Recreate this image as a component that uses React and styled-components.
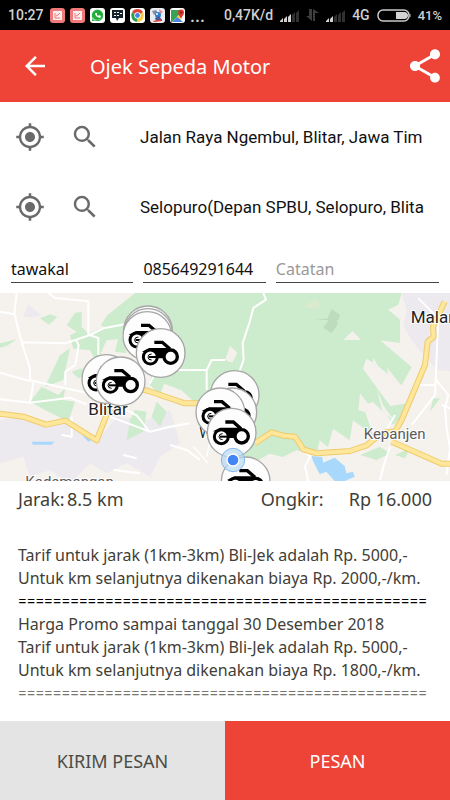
import styled, { createGlobalStyle } from "styled-components";
import { MdArrowBack, MdMyLocation, MdSearch, MdShare } from "react-icons/md";
import { FaWhatsapp } from "react-icons/fa";

const places = [
	{
		id: "pickup",
		label: "Lokasi jemput",
		value: "Jalan Raya Ngembul, Blitar, Jawa Tim",
	},
	{
		id: "destination",
		label: "Lokasi tujuan",
		value: "Selopuro(Depan SPBU, Selopuro, Blita",
	},
];

const drivers = [
	[444, 121],
	[444, 129],
	[442, 138],
	[482, 189],
	[319, 267],
	[362, 274],
	[704, 315],
	[697, 367],
	[661, 367],
	[695, 428],
	[737, 574],
];

const mainRoad =
	"M0 371l70 9 68 24 58-12 94 59 35-90 100-63 20 5 110 37h60M765 460l50-33 35 10 35 3 25 38 40 12 100-7 50-17 40-33 25-8h20l20-35 70-165 8-70 18-15-2-30 35-75M1175 455l150 66h30";

const separator = "=".repeat(47);

export default function App() {
	return (
		<>
			<GlobalStyle />
			<Page>
				<StatusBar />
				<Header>
					<IconButton aria-label='Kembali'>
						<MdArrowBack size={30} />
					</IconButton>
					<Title>Ojek Sepeda Motor</Title>
					<IconButton aria-label='Bagikan'>
						<MdShare size={40} />
					</IconButton>
				</Header>
				{places.map((p) => (
					<PlaceRow key={p.id}>
						<IconButton aria-label={`${p.label}: posisi saya`}>
							<MdMyLocation size={30} />
						</IconButton>
						<IconButton aria-label={`${p.label}: cari`}>
							<MdSearch size={30} />
						</IconButton>
						<PlaceInput aria-label={p.label} defaultValue={p.value} />
					</PlaceRow>
				))}
				<ContactRow>
					<ContactInput aria-label='Nama' defaultValue='tawakal' />
					<ContactInput
						aria-label='Nomor telepon'
						type='tel'
						defaultValue='085649291644'
					/>
					<ContactInput aria-label='Catatan' placeholder='Catatan' />
				</ContactRow>
				<DriverMap />
				<Summary>
					<Term>Jarak:</Term>
					<Distance>8.5 km</Distance>
					<Term $wide>Ongkir:</Term>
					<span>Rp 16.000</span>
				</Summary>
				<Fares>
					<p>Tarif untuk jarak (1km-3km) Bli-Jek adalah Rp. 5000,-</p>
					<p>Untuk km selanjutnya dikenakan biaya Rp. 2000,-/km.</p>
					<Separator $color='#000000'>{separator}</Separator>
					<p>Harga Promo sampai tanggal 30 Desember 2018</p>
					<p>Tarif untuk jarak (1km-3km) Bli-Jek adalah Rp. 5000,-</p>
					<p>Untuk km selanjutnya dikenakan biaya Rp. 1800,-/km.</p>
					<Separator $color='#77776f'>{separator}</Separator>
				</Fares>
				<Actions>
					<ActionButton>KIRIM PESAN</ActionButton>
					<ActionButton $primary>PESAN</ActionButton>
				</Actions>
			</Page>
		</>
	);
}

function StatusBar() {
	return (
		<StatusContainer>
			<Clock>10:27</Clock>
			<Notifications>
				<AppIcon $color='#f0797b'>
					<NoteDrawing />
				</AppIcon>
				<AppIcon $color='#f0797b'>
					<NoteDrawing />
				</AppIcon>
				<AppIcon $color='#ffffff'>
					<svg width='15' height='15' viewBox='0 0 15 15'>
						<circle cx='7.5' cy='7' r='5' fill='#1faf38' />
						<FaWhatsapp size={13} x={1} y={1} color='#1faf38' />
						<path d='M5 5q0 4 5 5l1-2-2-1-1 1-1-1 0-2z' fill='#ffffff' />
					</svg>
				</AppIcon>
				<AppIcon $color='#ffffff'>
					<svg width='15' height='15' viewBox='0 0 15 15'>
						<path d='M2 2h11v8H9l-2 3-1-3H2z' fill='#17242b' />
						<path
							d='M4 4h2v1H4zM7 4h2v1H7zM4 7h2v1H4zM7 7h2v1H7zM10 5h2v1h-2z'
							fill='#ffffff'
						/>
					</svg>
				</AppIcon>
				<AppIcon $color='#ffffff'>
					<svg width='15' height='15' viewBox='0 0 15 15'>
						<path d='M7.5 7.5L2 4.3A6.3 6.3 0 0 1 13 4.3z' fill='#de4538' />
						<path d='M7.5 7.5L2 4.3A6.3 6.3 0 0 0 7.5 13.8z' fill='#2c9e50' />
						<path d='M7.5 7.5L13 4.3A6.3 6.3 0 0 1 7.5 13.8z' fill='#f7cb3b' />
						<circle cx='7.5' cy='7.5' r='3.2' fill='#fff' />
						<circle cx='7.5' cy='7.5' r='2.4' fill='#4583e8' />
					</svg>
				</AppIcon>
				<AppIcon $color='#e9ecf0'>
					<svg width='15' height='15' viewBox='0 0 15 15'>
						<path d='M2 3l4-1 2 3-4 2z' fill='#7c90a8' />
						<path d='M9 1l4 3-3 2z' fill='#e48a8a' />
						<circle cx='8' cy='7' r='3' fill='#2f7fd0' />
						<path d='M5 10l4-2 3 4-6 1z' fill='#3f5f9c' />
						<path d='M3 13l9-2v2l-8 1z' fill='#df3b3b' />
						<circle cx='7' cy='6' r='1' fill='#fff' />
					</svg>
				</AppIcon>
				<AppIcon $color='#ffffff'>
					<svg width='15' height='15' viewBox='0 0 15 15'>
						<path d='M1 2h9v4L2 14H1z' fill='#35a455' />
						<path d='M2 14L10 6l1 8z' fill='#f3cf4c' />
						<path d='M7 9l6 5H2z' fill='#4a86e8' />
						<path d='M11 11C10 8 8 7 8 4.5a3 3 0 0 1 6 0C14 7 12 8 11 11z' fill='#d9392c' />
						<circle cx='11' cy='4.5' r='1' fill='#7a1712' />
					</svg>
				</AppIcon>
				<More>...</More>
			</Notifications>
			<span>0,47K/d</span>
			<Signal bars={3} />
			<svg width='13' height='14' viewBox='0 0 13 14' fill='#3d3d3d'>
				<path d='M3 1h3v12L0 8h3zM7 13h2V5h4L7 1z' />
			</svg>
			<Signal bars={2} />
			<span>4G</span>
			<svg width='34' height='13' viewBox='0 0 34 13'>
				<rect
					x='1'
					y='1'
					width='31'
					height='11'
					rx='5'
					fill='none'
					stroke='#c9c9c9'
					strokeWidth='1.5'
				/>
				<path d='M19 3h9q3 1 3 3.5T28 10h-9z' fill='#d4d4d4' />
				<path d='M33 5v3' stroke='#c9c9c9' />
			</svg>
			<Battery>41%</Battery>
		</StatusContainer>
	);
}

function NoteDrawing() {
	return (
		<svg width='9' height='9' viewBox='0 0 9 9'>
			<path d='M0 0h9v9H0z' fill='#fdeeee' />
			<path d='M2 2v5h5M3 5l2-1 2-2' fill='none' stroke='#ee7476' />
		</svg>
	);
}

function Signal({ bars }) {
	return (
		<svg width='19' height='13' viewBox='0 0 19 13'>
			{[0, 1, 2, 3, 4].map((i) => (
				<path
					key={i}
					d={`M${i * 4} 13v${-1 - i * 2}l3-3V13z`}
					fill={i < bars ? "#d2d2d2" : "#303030"}
				/>
			))}
		</svg>
	);
}

function Motorbike({ x, y }) {
	return (
		<g transform={`translate(${x} ${y})`}>
			<circle r='73' fill='#fdfdfd' stroke='#a6a6a6' strokeWidth='4' />
			<path d='M-56 -4L-34 -15H22L38 -8L14 2L6 16H-10L-14 2z' />
			<g fill='#fdfdfd' stroke='#000000'>
				<path d='M-19 -32H5L28 -12' fill='none' strokeWidth='10' />
				<circle cx='-31' cy='12' r='21' strokeWidth='9' />
				<circle cx='30' cy='11' r='20' strokeWidth='10' />
				<path d='M-35 12h24' strokeWidth='6' />
				<path d='M-27 3q-11 0-11 9t11 9' fill='none' strokeWidth='3' />
			</g>
		</g>
	);
}

// drawn at three units per pixel
function DriverMap() {
	return (
		<MapDrawing
			viewBox='0 9 1350 564'
			preserveAspectRatio='xMidYMin slice'
			role='img'
			aria-label='Peta pengemudi'>
			<path d='M0 0h1350v580H0z' fill='#f5f2ee' />
			<g fill='#ece9ef'>
				<path d='M0 390l60-10 70 30 60-12 100 57 60-75 90 10 70-30 30 100-60 40-30 60-70-40-60 30-50-30-60 60-60-40-60 20-20-60-70 20z' />
				<path d='M70 80l15-38 40 35-30 5zM1205 9h145v235l-40-5-70-80-30-50 10-50z' />
			</g>
			<g fill='#cdebcd'>
				<path d='M405 9h800l-10 35-30 15 35 30v70l-60-8 95 80-30 55-80-65-26-15-10 30 80 110 20 60-70-70-30 10 30 90-60-45-10 60-50-35-15 55-25-20-10 45-60-15-40 20-40-10-35 20-110-25-70-80v-60l-50-45-52-20-10-50 12-45-60 20 8-50-40-10 40-30-30-20-65 35-45-25 20-30z' />
				<path d='M225 68l20-2v45l20 20 60-25 50 5-15 35-40 5-30 65-20-35-50-5-10-40 20-10-30-20zM360 120l20 70-35-5zM180 195l30-20-20 95-55 20z' />
				<path d='M120 85l30-12 22 8-25 23zM0 160l50-12-30 20-20 5zM215 245l30-10 15 20-25 10zM90 335l35-45 50 25 20-20-5 35 35 5-20 60-70-35zM405 360l35 5-10 60-50 25 10-60zM455 380l15-45 30 30-20 45zM455 240l60-20-35 95-30-30zM580 270l20-40 20 10-30 65z' />
				<path d='M815 440l50 15-15 20-35-5zM1080 495l60-25 30 20-40 20zM1160 350l60-10-15 45-30 20zM1300 325l20 0-30 40zM1230 475l-45 20 30 10z' />
			</g>
			<g fill='#f4f1ec'>
				<path d='M1030 150l28-27 25 27zM1115 240l5-37 40 70zM1160 232l45 55-35-5zM1080 310l55 70-60-20zM1130 295l35 90-15-10zM1155 370l-20-45 50 70zM675 210l15-42 22 20-15 30z' />
			</g>
			<path d='M910 50l35-22 23 20-28 8z' fill='#d9ebcc' />
			<path
				d='M948 90l35-5 12-28 25 18-5 15-20 10-15-10zM970 113l25-35 20 22-20 30z'
				fill='#bddcbf'
			/>
			<path
				d='M96 455h68l-10 9H98zM935 498l32 3 2 17 35-15 30 25 5 22 20-5 5 15-30 13h-30l-25-28-20 8-20-40zM245 435l30 15-10 5z'
				fill='#a8d8fb'
			/>
			<g fill='none' stroke='#ffffff' strokeWidth='6' strokeLinejoin='round'>
				<path d='M50 9l-7 62 22 85 25 80v35l200 45 120 60 40 50' />
				<path d='M0 65l43 8M145 9l20 15 100 10v100l30 10v50M65 157l130 3 75-25 40-20 80-15M228 150l8 15-10 60-30 20v40M0 248l90 25M0 328l90 10 10-60' />
				<path d='M90 338l120-15 50 20M215 380v60l-30-5M330 380l120 45 60-15 60-10M510 465l50 15 40 30M370 495l40 10M340 540l80 10M450 280l20-40h150l15-30h40M620 240v60' />
				<path d='M790 9l8 20-38 25-12 45-20 60 3 50-20 55M500 240h120M900 470l30 30-15 30 10 43M1170 470l-20 60-10 40M1255 25l60 60-10 230-70 90M1305 265l40 50-10 40 5 60 10 60-10 80M1260 285h50M1325 345l25 10M1145 445l40-70' />
				<path d='M620 500l15-70M580 470l45 50' strokeWidth='4' />
			</g>
			<g fill='none' strokeLinejoin='round'>
				<path d={mainRoad} stroke='#efcb6c' strokeWidth='18' />
				<path d={mainRoad} stroke='#fee79a' strokeWidth='12' />
			</g>
			<MapLabel x='265' y='374' $size={51}>
				Blitar
			</MapLabel>
			<MapLabel x='598' y='444' $size={42}>
				Wlingi
			</MapLabel>
			<MapLabel x='1232' y='100' $size={51}>
				Malang
			</MapLabel>
			<MapLabel x='1091' y='447' $size={45} $soft>
				Kepanjen
			</MapLabel>
			<MapLabel x='76' y='592' $size={45} $soft>
				Kademangan
			</MapLabel>
			{drivers.map(([x, y]) => (
				<Motorbike key={`${x}-${y}`} x={x} y={y} />
			))}
			<circle
				cx='699'
				cy='510'
				r='35'
				fill='#b8d8f2'
				fillOpacity='0.7'
				stroke='#86b9e6'
				strokeWidth='3'
			/>
			<circle cx='699' cy='510' r='20' fill='#ffffff' />
			<circle cx='699' cy='510' r='16' fill='#4285f4' />
		</MapDrawing>
	);
}

const GlobalStyle = createGlobalStyle`
	* {
		box-sizing: border-box;
	}
	body {
		margin: 0;
		background-color: #ffffff;
	}
	p, h1 {
		margin: 0;
	}
	button, input {
		font-family: inherit;
		border: none;
		padding: 0;
		background: none;
	}
`;

const Page = styled.div`
	min-height: 100vh;
	display: flex;
	flex-direction: column;
	font-family: "Noto Sans", sans-serif;
	color: #3f4037;
`;

const StatusContainer = styled.div`
	height: 30px;
	padding: 0 8px;
	display: flex;
	align-items: center;
	gap: 7px;
	background-color: #000000;
	color: #d0d0d0;
	font-family: "Roboto", sans-serif;
	font-size: 14px;
	font-weight: 500;
`;

const Clock = styled.span`
	width: 35px;
`;

const Battery = styled.span`
	font-size: 13px;
`;

const Notifications = styled.div`
	flex: 1;
	display: flex;
	align-items: center;
	gap: 5px;
`;

const AppIcon = styled.span`
	width: 15px;
	height: 15px;
	border-radius: 3px;
	display: flex;
	align-items: center;
	justify-content: center;
	background-color: ${(props) => props.$color};
`;

const More = styled.span`
	font-size: 18px;
`;

const Header = styled.header`
	height: 72px;
	padding: 0 5px 0 20px;
	display: flex;
	align-items: center;
	background-color: #ee4437;
	color: #ffffff;
`;

const Title = styled.h1`
	flex: 1;
	margin-left: 40px;
	font-size: 20px;
	font-weight: 400;
`;

const IconButton = styled.button`
	display: flex;
	color: inherit;
	cursor: pointer;
`;

const PlaceRow = styled.div`
	height: 70px;
	padding: 0 20px 0 15px;
	display: flex;
	align-items: center;
	gap: 25px;
	color: #6a6a6a;
`;

const PlaceInput = styled.input`
	flex: 1;
	min-width: 0;
	margin-left: 15px;
	font-family: "Roboto", sans-serif;
	font-size: 17px;
	color: #111111;
`;

const ContactRow = styled.div`
	height: 51px;
	padding: 14px 11px 10px;
	display: grid;
	grid-template-columns: 3fr 3fr 4fr;
	gap: 10px;
`;

const ContactInput = styled.input`
	width: 100%;
	min-width: 0;
	border-bottom: 1px solid #444444;
	font-size: 16px;
	color: #111111;
	&::placeholder {
		color: #999999;
	}
`;

const MapDrawing = styled.svg`
	display: block;
	width: 100%;
	height: 188px;
`;

const MapLabel = styled.text`
	font-family: "Roboto", sans-serif;
	font-size: ${(props) => props.$size}px;
	fill: ${(props) => (props.$soft ? "#5b5b5b" : "#222222")};
	stroke: #ffffff;
	stroke-width: 6px;
	paint-order: stroke;
`;

const Summary = styled.div`
	height: 36px;
	padding: 0 18px;
	display: flex;
	align-items: center;
	font-size: 18px;
`;

const Term = styled.span`
	width: ${(props) => (props.$wide ? "88px" : "49px")};
`;

const Distance = styled.span`
	flex: 1;
`;

const Fares = styled.div`
	padding: 27px 18px 16px;
	font-size: 16px;
	line-height: 23px;
	white-space: nowrap;
`;

const Separator = styled.p`
	font-family: "Lato", sans-serif;
	font-size: 15px;
	color: ${(props) => props.$color};
`;

const Actions = styled.div`
	height: 79px;
	margin-top: auto;
	display: flex;
`;

const ActionButton = styled.button`
	flex: 1;
	font-size: 18px;
	cursor: pointer;
	background-color: ${(props) => (props.$primary ? "#ee4437" : "#e4e4e4")};
	color: ${(props) => (props.$primary ? "#ffffff" : "#4c4c44")};
`;
